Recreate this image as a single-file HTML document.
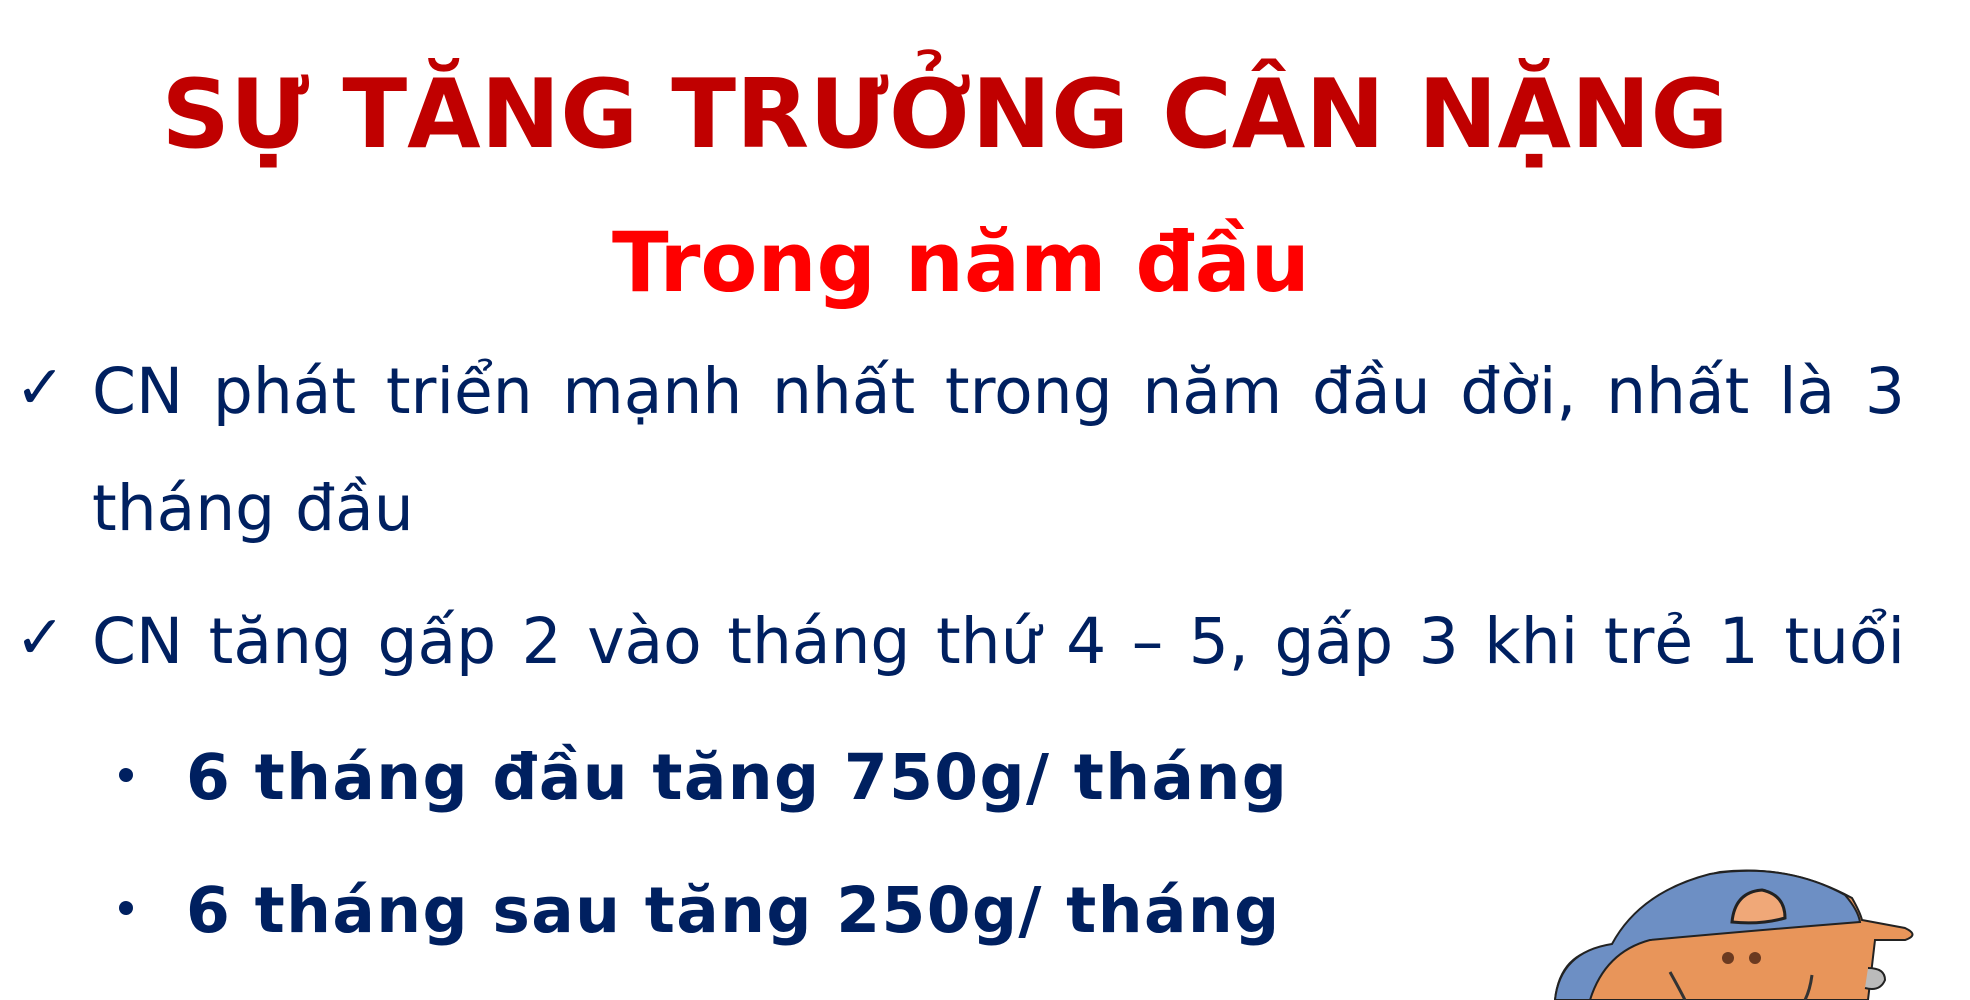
<!DOCTYPE html>
<html><head><meta charset="utf-8"><style>
body{margin:0;width:1970px;height:1000px;background:#fff;position:relative;overflow:hidden;font-family:"DejaVu Sans","Liberation Sans",sans-serif}
.a{position:absolute;line-height:1;white-space:nowrap}
.t{left:0;width:1890px;text-align:center;font-weight:bold;font-size:95px;color:#c00000;top:68px}
.s{left:612px;width:694px;text-align:center;font-weight:bold;font-size:83px;color:#ff0000;top:221px}
.b{color:#002060;font-size:63px;left:92px;width:1813px}
.j{text-align:justify;text-align-last:justify;white-space:normal}
.ck{position:absolute;left:15px;font-size:60px;color:#002060}
.bl{font-weight:bold;left:186px;width:auto;letter-spacing:1.4px}
.dot{position:absolute;left:119px;width:14px;height:14px;border-radius:50%;background:#002060}
</style></head><body>
<div class="a t">SỰ TĂNG TRƯỞNG CÂN NẶNG</div>
<div class="a s">Trong năm đầu</div>
<div class="a ck" style="top:358px">✓</div>
<div class="a b j" style="top:360px">CN phát triển mạnh nhất trong năm đầu đời, nhất là 3</div>
<div class="a b" style="top:477px">tháng đầu</div>
<div class="a ck" style="top:608px">✓</div>
<div class="a b j" style="top:610px">CN tăng gấp 2 vào tháng thứ 4 – 5, gấp 3 khi trẻ 1 tuổi</div>
<div class="dot" style="top:768px"></div>
<div class="a b bl" style="top:746px">6 tháng đầu tăng 750g/ tháng</div>
<div class="dot" style="top:901px"></div>
<div class="a b bl" style="top:879px">6 tháng sau tăng 250g/ tháng</div>
<svg style="position:absolute;left:1500px;top:840px" width="470" height="160" viewBox="0 0 470 160">
<path d="M55 160 Q60 112 105 108 L130 98 Q160 45 220 32 Q290 24 352 58 Q360 72 362 80 L405 88 Q420 95 405 100 L375 100 L368 160 Z" fill="#e8955a" stroke="#222" stroke-width="2"/>
<path d="M55 160 Q60 112 112 104 Q140 52 210 34 Q285 22 345 55 Q358 70 360 82 Q260 90 150 100 Q105 112 90 160 Z" fill="#6d8fc4" stroke="#222" stroke-width="2"/>
<path d="M232 82 Q235 52 262 50 Q285 55 285 78 Q260 85 232 82 Z" fill="#f0a878" stroke="#222" stroke-width="3"/>
<circle cx="228" cy="118" r="6" fill="#6b3a20"/><circle cx="255" cy="118" r="6" fill="#6b3a20"/>
<path d="M368 128 Q385 128 385 140 Q380 152 365 148" fill="#bbb" stroke="#222" stroke-width="2"/>
<path d="M170 132 Q180 150 185 160 M312 135 Q310 150 305 160" stroke="#333" stroke-width="3" fill="none"/>
</svg>
</body></html>
